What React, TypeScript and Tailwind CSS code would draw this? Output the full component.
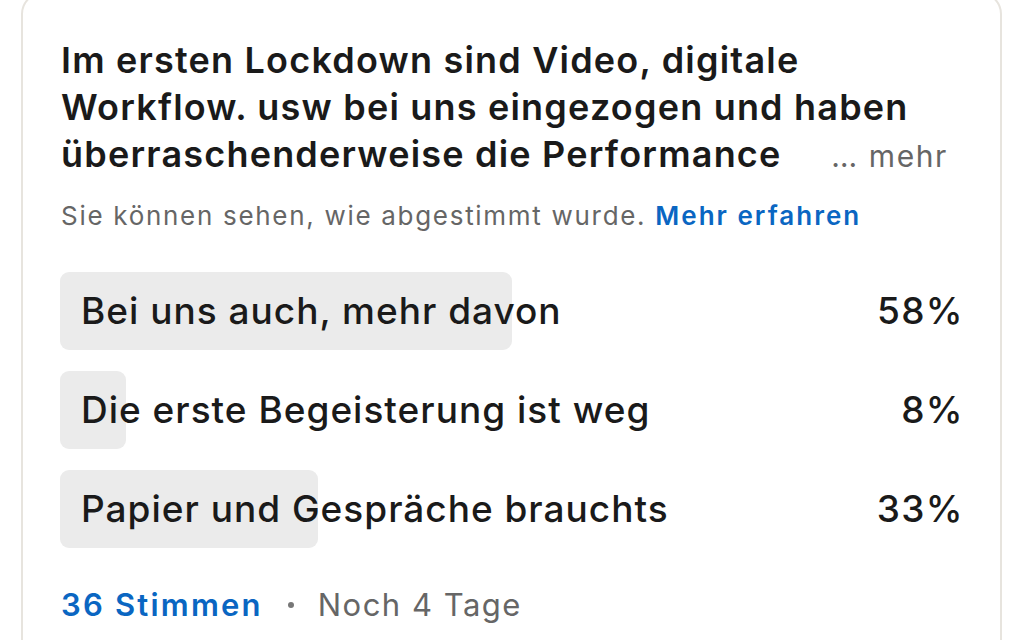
import React from 'react';

interface PollOption {
  label: string;
  percent: number;
  barWidth: number;
}

const options: PollOption[] = [
  { label: 'Bei uns auch, mehr davon', percent: 58, barWidth: 452 },
  { label: 'Die erste Begeisterung ist weg', percent: 8, barWidth: 66 },
  { label: 'Papier und Gespräche brauchts', percent: 33, barWidth: 258 },
];

const titleLines = [
  'Im ersten Lockdown sind Video, digitale',
  'Workflow. usw bei uns eingezogen und haben',
  'überraschenderweise die Performance',
];

const App: React.FC = () => {
  return (
    <div className="w-[1024px] h-[640px] overflow-hidden bg-white font-['Inter',sans-serif]">
      <div className="ml-[21px] w-[981px] -mt-[8px] h-[700px] rounded-[22px] border-2 border-[#e7e4de] bg-white pl-[38px] pr-[38px] pt-[43px]">
        <h2 className="text-[36px] leading-[47px] font-semibold text-[#1a1a1a] tracking-[1.2px]">
          {titleLines.map((line, i) => (
            <div key={i} className="flex items-baseline justify-between">
              <span>{line}</span>
              {i === titleLines.length - 1 && (
                <span className="text-[30px] font-normal text-[#666666] tracking-[1.6px] mr-[14px]">… mehr</span>
              )}
            </div>
          ))}
        </h2>

        <p className="mt-[20px] text-[26px] leading-[32px] text-[#666666] tracking-[1.7px]">
          Sie können sehen, wie abgestimmt wurde.{' '}
          <span className="font-semibold text-[#0a66c2] tracking-[2px]">Mehr erfahren</span>
        </p>

        <div className="mt-[40px] flex flex-col gap-[21px]">
          {options.map(opt => (
            <div key={opt.label} className="relative h-[78px] -ml-[1px] flex items-center justify-between">
              <div
                className="absolute left-0 top-0 h-full rounded-[9px] bg-[#ebebeb]"
                style={{ width: opt.barWidth }}
              />
              <span className="relative pl-[21px] text-[37px] font-medium text-[#1a1a1a] tracking-[1px]">
                {opt.label}
              </span>
              <span className="relative -mr-[2px] text-[37px] font-medium text-[#1a1a1a] tracking-[1.4px]">
                {opt.percent}%
              </span>
            </div>
          ))}
        </div>

        <div className="mt-[39px] flex items-center text-[31px] leading-[36px] tracking-[1.5px]">
          <span className="font-semibold text-[#0a66c2] tracking-[2.2px]">36 Stimmen</span>
          <span className="ml-[25px] mr-[24px] w-[6px] h-[6px] rounded-full bg-[#777777]" />
          <span className="text-[#666666]">Noch 4 Tage</span>
        </div>
      </div>
    </div>
  );
};

export default App;
